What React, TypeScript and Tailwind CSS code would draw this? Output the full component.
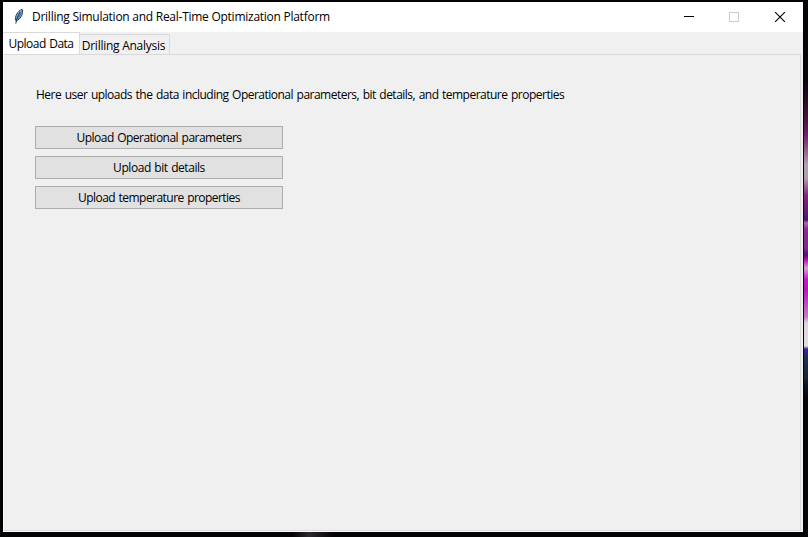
import React from 'react';

function Feather() {
  return (
    <svg width="12" height="18" viewBox="0 0 12 18" className="block">
      <path d="M2.6 12.3C1.8 8.5 4.3 3 9.2 1.4c1 4-.6 8.2-4.6 10.8z" fill="#8dbdea" stroke="#27374c" strokeWidth="1" />
      <path d="M4.4 12C7.4 9.8 9.2 6 8.9 2.2L5.3 7.5z" fill="#4a86cc" />
      <path d="M7.3 4C5 7 3.6 10.6 2.8 15.6" fill="none" stroke="#10151d" strokeWidth=".9" />
    </svg>
  );
}

function TitleBar() {
  return (
    <header className="flex h-[30px] shrink-0 items-center bg-white">
      <div className="ml-[10px] w-[19px] shrink-0">
        <Feather />
      </div>
      <h1 className="flex-1 whitespace-nowrap leading-[30px] tracking-[-0.26px]">Drilling Simulation and Real-Time Optimization Platform</h1>
      <div className="flex shrink-0">
        <button aria-label="Minimize" className="flex h-[30px] w-[45px] items-center justify-center pr-px">
          <svg width="10" height="10" shapeRendering="crispEdges"><path d="M0 4h10v1H0z" fill="#000" /></svg>
        </button>
        <button aria-label="Maximize" className="flex h-[30px] w-[45px] items-center justify-center pr-px">
          <svg width="10" height="10" viewBox="0 0 10 10"><rect x=".5" y=".5" width="9" height="9" fill="none" stroke="#ccc" /></svg>
        </button>
        <button aria-label="Close" className="flex h-[30px] w-[46px] items-center justify-center">
          <svg width="10" height="10"><path d="M0 0l10 10M10 0L0 10" stroke="#000" strokeWidth="1.1" /></svg>
        </button>
      </div>
    </header>
  );
}

const uploads = [
  { label: 'Upload Operational parameters', tracking: 'tracking-[-0.51px]' },
  { label: 'Upload bit details', tracking: 'tracking-[-0.44px]' },
  { label: 'Upload temperature properties', tracking: 'tracking-[-0.54px]' },
];

export default function App() {
  return (
    <div className="flex h-[537px] w-[808px] overflow-hidden bg-[#030205] font-['Open_Sans','Noto_Sans',sans-serif] text-[12px] text-black">
      <div className="flex w-[804px] shrink-0 flex-col pl-[3px] pt-[2px]">
        <main className="flex h-[530px] w-[800px] flex-col border-b border-white bg-[#f0f0f0]">
          <TitleBar />
          <nav className="flex h-[22px] shrink-0 items-end whitespace-nowrap">
            <button className="-mb-px h-[23px] w-[77px] border-r border-t border-[#d9d9d9] bg-white text-center leading-[20px] tracking-[-0.5px] [word-spacing:0.8px]">Upload Data</button>
            <button className="h-[20px] w-[90px] border-r border-t border-[#d9d9d9] pr-[2px] pt-px leading-[20px] tracking-[-0.26px]">Drilling Analysis</button>
          </nav>
          <section className="mr-[2px] h-[477px] shrink-0 border border-l-[#f8f8f8] border-[#d9d9d9] pl-[31px] pt-[31px]">
            <p className="whitespace-nowrap pl-px leading-[18px] tracking-[-0.51px] [word-spacing:0.92px]">
              Here user uploads the data including Operational parameters, bit details, and temperature properties
            </p>
            <div className="mt-[22px] flex w-[248px] flex-col gap-[7px]">
              {uploads.map(({ label, tracking }) => (
                <button key={label} className={`h-[23px] border border-[#adadad] bg-[#e1e1e1] pt-px leading-[20px] [word-spacing:0.85px] ${tracking}`}>{label}</button>
              ))}
            </div>
          </section>
        </main>
        <div className="ml-[290px] h-[5px] w-[40px] bg-[linear-gradient(90deg,#030205,#2e2730_40%,#030205)]" />
      </div>
      <div className="h-[537px] w-[4px] bg-[linear-gradient(180deg,#050308_0px,#08050b_80px,#421239_115px,#702066_135px,#b3a0b3_165px,#afa0af_178px,#86267d_195px,#4c1770_220px,#b068b5_223px,#8c2995_229px,#852991_248px,#51117a_255px,#c010bd_260px,#d6a0d4_268px,#c218c0_280px,#b719b8_290px,#cc78cc_317px,#ddd5dd_323px,#e2dce2_346px,#3c239c_349px,#31228a_353px,#1b344a_358px,#15283b_377px,#0b121b_386px,#030508_400px)]" />
    </div>
  );
}
